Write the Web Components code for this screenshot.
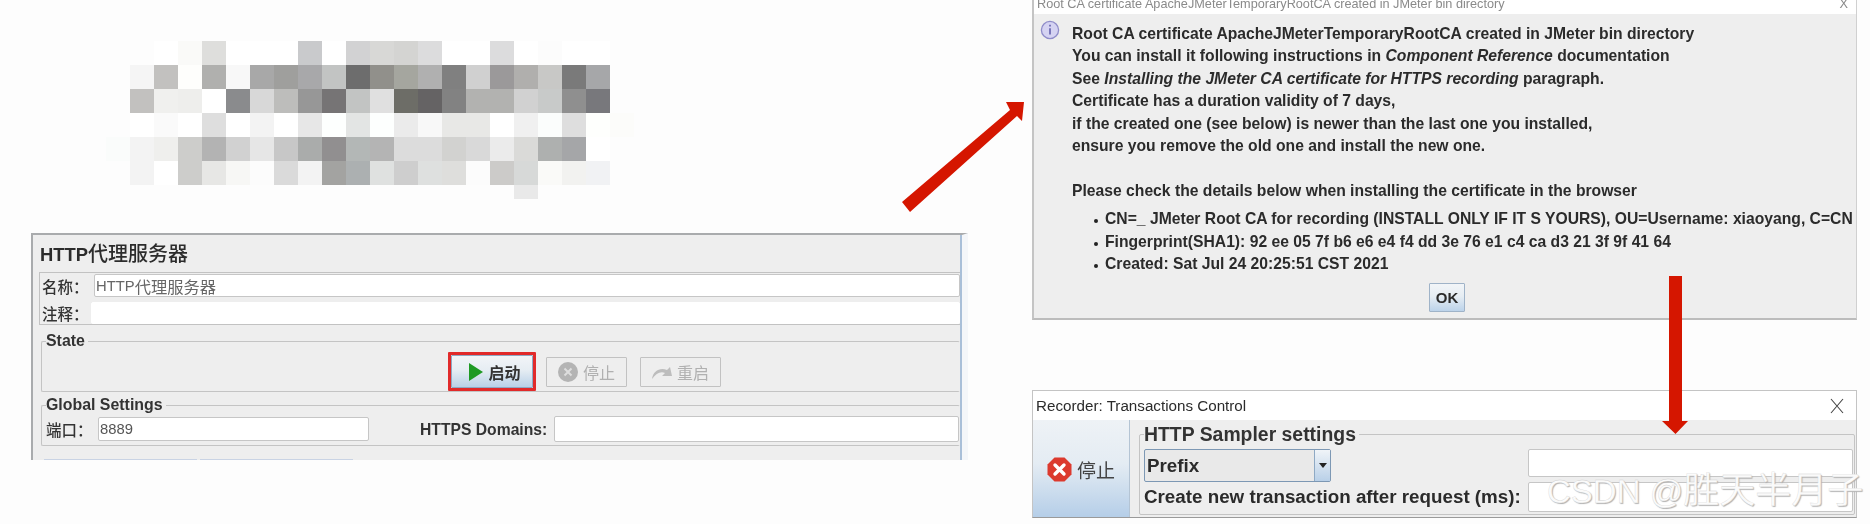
<!DOCTYPE html>
<html lang="zh">
<head>
<meta charset="utf-8">
<title>JMeter HTTP proxy recording</title>
<style>
  html, body { margin: 0; background: #fdfdfd; }
  body { width: 1870px; height: 524px; overflow: hidden; font-family: "Liberation Sans", "Noto Sans CJK SC", sans-serif; }
  #stage { position: relative; width: 1870px; height: 524px; }
  /* collage: each piece sits at its own place on the canvas */
  pixel-mosaic, proxy-panel, cert-dialog, recorder-panel, call-arrows, water-mark { position: absolute; }
  pixel-mosaic { left: 106px; top: 41px; }
  proxy-panel { left: 31px; top: 233px; }
  cert-dialog { left: 1032px; top: 0; }
  recorder-panel { left: 1032px; top: 390px; }
  call-arrows { left: 0; top: 0; }
  water-mark { left: 1547px; top: 469px; }
  water-mark span { font-size: 36px; }
</style>
</head>
<body>
<div id="stage">
  <pixel-mosaic></pixel-mosaic>
  <proxy-panel></proxy-panel>
  <cert-dialog></cert-dialog>
  <recorder-panel></recorder-panel>
  <call-arrows></call-arrows>
  <water-mark>CSDN @<span>胜天半月子</span></water-mark>
</div>

<script>
// Shared font stack for the shadow roots
const uiFont = `"Liberation Sans", "Noto Sans CJK SC", sans-serif`;

// Small helper: every element just clones its own template into an open root
function defineElement(name, html) {
  const template = document.createElement("template");
  template.innerHTML = html;
  customElements.define(name, class extends HTMLElement {
    constructor() {
      super();
      this.attachShadow({ mode: "open" });
      this.shadowRoot.appendChild(template.content.cloneNode(true));
    }
  });
}

// Blurred-out block at the top left
const mosaicRows = [
  "fdfdfd fdfdfd fff fafaf8 dededc fff fff fff c9cacc fff d2d2d3 d8d8d6 d4d4d2 dcdcdd fff fff dcdcdd fff fcfcfc fff fff fdfdfd",
  "fdfdfd f5f5f5 c2c1bf fefefc b0b0ae f8f8f8 a8a8a8 9f9f9d a8a8aa c2c4c3 6d6d6d 91908b a5a69f b0b0b0 808080 d0d0d0 9b999a b0afad c8c8c6 7a7a7a a6a7a9 fdfdfd",
  "fdfdfd c2c1bf f0f0ee eeeeec fff 8a8b8d d8d8d8 bdbdbb 979797 767475 c2c4c3 e0e0e0 6d6d67 656364 828282 b2b2b0 b2b2b0 d1d1d1 c8cac9 8f8f8f 78787c fdfdfd",
  "fdfdfd fff fafafa fff dedede fff f3f3f3 fff e7e7e7 fdfffe e3e5e4 fdfffe ebebeb f8f8f8 e8e8e6 e8e8e6 fff f0f0f0 fbfdfc dedede fefffd fcfcfa",
  "fafcfb f3f3f3 efefed cdcdcb b3b3b3 d1d1d1 e6e6e6 c7c7c7 aaacab 918f90 b3b7b6 b4b4b4 dcdcdc dcdcdc d2d2d0 d9d9d9 ebebeb dadad8 aeb0af a5a6a8 fff fdfdfd",
  "fdfdfd f3f3f3 fff cdcdcb e7e7e5 f7f7f5 fcfcfc dadada f3f3f3 a3a3a1 acb0b1 dfe1e0 cecece dee0df dededc fcfcfc cccbc9 d7d9d8 fafaf8 f2f2f0 f1f2f4 fdfdfd",
];

class PixelMosaic extends HTMLElement {
  constructor() {
    super();
    this.attachShadow({ mode: "open" });
    const cells = mosaicRows
      .flatMap((row) => row.split(" "))
      .map((c) => `<i style="background:#${c}"></i>`)
      .join("");
    this.shadowRoot.innerHTML = `
      <style>
        :host { display: grid; grid-template-columns: repeat(22, 24px); grid-auto-rows: 24px; }
        i { display: block; }
        .tail { grid-column: 18; height: 14px; background: #e9e9e9; }
      </style>
      ${cells}<i class="tail"></i>`;
  }
}
customElements.define("pixel-mosaic", PixelMosaic);

// Swing style titled border
defineElement("swing-group", `
  <style>
    :host { display: block; box-sizing: border-box; }
    fieldset {
      box-sizing: border-box;
      height: 100%;
      margin: 0;
      padding: 0;
      border: 1px solid var(--group-line, #c4c4c4);
      border-right-color: var(--group-right, #c4c4c4);
      border-radius: 2px;
      min-width: 0;
    }
    legend {
      margin-left: 4px;
      padding: 0 3px 0 0;
      font-weight: bold;
      color: #333;
      font-size: var(--legend-size, 15.9px);
      line-height: var(--legend-height, 18px);
    }
  </style>
  <fieldset>
    <legend><slot name="legend"></slot></legend>
    <slot></slot>
  </fieldset>
`);

defineElement("swing-button", `
  <style>
    :host {
      display: inline-flex;
      align-items: center;
      justify-content: center;
      gap: 5px;
      box-sizing: border-box;
      width: 81px;
      height: 30px;
      border: 1px solid #c2c2c2;
      border-radius: 1px;
      font-size: 16px;
      color: #b0b0b0;
      background: #eeeeee;
    }
    :host([active]) {
      width: 82px;
      height: 33px;
      padding-left: 6px;
      border-color: #8ea9c4;
      color: #333;
      font-weight: bold;
      background: linear-gradient(#f2f5f8, #e6edf3 45%, #b9d1e8);
    }
    ::slotted(svg) { flex: none; }
  </style>
  <slot name="icon"></slot><slot></slot>
`);

// Text box
defineElement("swing-input", `
  <style>
    :host {
      display: flex;
      align-items: center;
      box-sizing: border-box;
      min-width: 0;
      padding-left: 1px;
      background: #fff;
      border: 1px solid var(--input-line, #c6c6c6);
      border-radius: 2px;
      font-size: 14.8px;
      color: var(--input-color, #666);
      white-space: nowrap;
      overflow: hidden;
    }
  </style>
  <slot></slot>
`);

// HTTP proxy settings panel on the lower left
defineElement("proxy-panel", `
  <style>
    :host {
      display: flex;
      flex-direction: column;
      box-sizing: border-box;
      width: 937px;
      height: 227px;
      overflow: hidden;
      background: #eeeeee;
      border-top: 2px solid #a9abad;
      border-left: 2px solid #a9abad;
      border-right: 6px solid #f4f6f9;
      font-family: ${uiFont};
      color: #333;
      filter: blur(0.35px);
    }
    .inner { display: flex; flex-direction: column; height: 100%; border-right: 2px solid #a9bfd8; }
    h1 {
      flex: none;
      box-sizing: border-box;
      height: 37px;
      margin: 0;
      padding: 8px 0 0 7px;
      font-size: 18.4px;
      line-height: 23px;
      font-weight: bold;
      color: #2c2c2c;
    }
    h1 span { font-size: 20px; font-weight: 500; }
    .names {
      flex: none;
      box-sizing: border-box;
      height: 53px;
      margin-left: 6px;
      border: 1px solid #c2c2c2;
      border-right: 0;
      display: grid;
      grid-template-rows: 23px 22px;
      row-gap: 5px;
      padding-top: 1px;
    }
    .name-row { display: grid; align-items: center; font-size: 15.5px; padding-left: 2px; font-weight: 500; }
    .name-row.first { grid-template-columns: 52px 1fr; }
    .name-row.second { grid-template-columns: 49px 1fr; }
    .name-row swing-input { height: 100%; font-weight: normal; }
    .name-row.second swing-input { --input-line: #fff; }
    .cjk { font-size: 16.3px; }
    .state { flex: none; height: 60px; margin: 7px 0 0 8px; --group-right: transparent; }
    .state-row { display: flex; align-items: flex-start; padding: 2px 0 0 406px; gap: 10px; }
    .mark { box-sizing: border-box; display: flex; width: 88px; height: 39px; border: 3px solid #e12a2a; border-radius: 1px; }
    .restart { margin-left: 3px; }
    .state-row swing-button:not([active]) { margin-top: 5px; }
    .global { flex: none; height: 50px; margin: 4px 0 0 8px; --group-right: transparent; }
    .global-row { display: flex; align-items: flex-start; padding: 3px 0 0 4px; font-size: 15.5px; font-weight: 500; }
    .global-row .port { width: 52px; line-height: 28px; }
    .global-row swing-input { height: 24px; font-weight: normal; --input-color: #555; }
    .port-input { width: 271px; }
    .https { margin-left: 51px; width: 134px; font-weight: bold; font-size: 15.7px; line-height: 25px; white-space: nowrap; }
    .https-input { flex: 1; height: 26px !important; margin-top: -1px; }
    .tabs { flex: none; display: flex; gap: 3px; height: 4px; margin: 13px 0 0 11px; }
    .tabs i { display: block; width: 153px; background: #c9d3e4; }
  </style>
  <div class="inner">
    <h1>HTTP<span>代理服务器</span></h1>
    <div class="names">
      <div class="name-row first"><span>名称：</span><swing-input>HTTP<span class="cjk">代理服务器</span></swing-input></div>
      <div class="name-row second"><span>注释：</span><swing-input></swing-input></div>
    </div>
    <swing-group class="state">
      <span slot="legend">State</span>
      <div class="state-row">
        <div class="mark">
          <swing-button active>
            <svg slot="icon" width="14" height="18" viewBox="0 0 14 18"><path d="M0 0 L14 9 L0 18 Z" fill="#1e9a24"/></svg>启动
          </swing-button>
        </div>
        <swing-button>
          <svg slot="icon" width="20" height="20" viewBox="0 0 20 20"><circle cx="10" cy="10" r="10" fill="#b4b4b4"/><path d="M6.5 6.5 L13.5 13.5 M13.5 6.5 L6.5 13.5" stroke="#dedede" stroke-width="2"/></svg>停止
        </swing-button>
        <swing-button class="restart">
          <svg slot="icon" width="20" height="13" viewBox="0 0 20 13"><path d="M0 13 C1 5 8 1 15 4 L18 1 L20 10 L10 10 L13 7 C8 5 4 8 0 13 Z" fill="#bdbdbd"/></svg>重启
        </swing-button>
      </div>
    </swing-group>
    <swing-group class="global">
      <span slot="legend">Global Settings</span>
      <div class="global-row">
        <span class="port">端口：</span>
        <swing-input class="port-input">8889</swing-input>
        <span class="https">HTTPS Domains:</span>
        <swing-input class="https-input"></swing-input>
      </div>
    </swing-group>
    <div class="tabs"><i></i><i></i></div>
  </div>
`);

// Root CA message box, its title bar is cut by the top of the picture
defineElement("cert-dialog", `
  <style>
    :host {
      display: flex;
      flex-direction: column;
      box-sizing: border-box;
      width: 825px;
      height: 320px;
      background: #eeeeee;
      border-left: 2px solid #c4c4c4;
      border-right: 1px solid #d0d0d0;
      border-bottom: 2px solid #bcbcbc;
      font-family: ${uiFont};
      color: #2b2b2b;
      filter: blur(0.3px);
    }
    .bar {
      flex: none;
      display: flex;
      align-items: flex-end;
      justify-content: space-between;
      height: 14px;
      background: #fff;
      overflow: hidden;
      padding: 0 8px 0 3px;
      font-size: 12.7px;
      line-height: 20px;
      color: #8a8a8a;
    }
    .body { flex: 1; display: flex; padding: 9px 0 0 6px; min-height: 0; }
    svg { flex: none; margin: -3px 12px 0 0; }
    .msg { font-size: 15.7px; font-weight: bold; line-height: 22.4px; min-width: 0; white-space: nowrap; }
    p { margin: 0; }
    .gap { height: 22.4px; }
    ul { list-style: none; margin: 6px 0 0; padding: 0 0 0 22px; }
    li { display: flex; align-items: center; gap: 7px; }
    li::before { content: ""; width: 4px; height: 4px; margin-top: 4px; border-radius: 50%; background: #222; flex: none; }
    .ok { display: flex; justify-content: center; padding: 8px 0 0 0; width: 750px; }
    button {
      box-sizing: border-box;
      width: 36px;
      height: 29px;
      padding: 0;
      font: bold 15px ${uiFont};
      color: #2b2b2b;
      border: 1px solid #9fb3c8;
      border-radius: 1px;
      background: linear-gradient(#f2f5f8, #e6edf3 45%, #bcd3ea);
    }
  </style>
  <div class="bar"><span>Root CA certificate ApacheJMeterTemporaryRootCA created in JMeter bin directory</span><span>X</span></div>
  <div class="body">
    <svg width="20" height="20" viewBox="0 0 20 20">
      <circle cx="10" cy="10" r="8.6" fill="#d5d3f2" stroke="#8f8cc9" stroke-width="1.3"/>
      <path d="M10 4.8 V6.4 M10 8.2 V14.6" stroke="#5b58a8" stroke-width="1.5"/>
    </svg>
    <div class="msg">
      <p>Root CA certificate ApacheJMeterTemporaryRootCA created in JMeter bin directory</p>
      <p>You can install it following instructions in <i>Component Reference</i> documentation</p>
      <p>See <i>Installing the JMeter CA certificate for HTTPS recording</i> paragraph.</p>
      <p>Certificate has a duration validity of 7 days,</p>
      <p>if the created one (see below) is newer than the last one you installed,</p>
      <p>ensure you remove the old one and install the new one.</p>
      <div class="gap"></div>
      <p>Please check the details below when installing the certificate in the browser</p>
      <ul>
        <li>CN=_ JMeter Root CA for recording (INSTALL ONLY IF IT S YOURS), OU=Username: xiaoyang, C=CN</li>
        <li>Fingerprint(SHA1): 92 ee 05 7f b6 e6 e4 f4 dd 3e 76 e1 c4 ca d3 21 3f 9f 41 64</li>
        <li>Created: Sat Jul 24 20:25:51 CST 2021</li>
      </ul>
      <div class="ok"><button>OK</button></div>
    </div>
  </div>
`);

// Recorder window at the lower right
defineElement("recorder-panel", `
  <style>
    :host {
      display: flex;
      flex-direction: column;
      box-sizing: border-box;
      width: 825px;
      height: 128px;
      background: #eeeeee;
      border: 1px solid #c4c4c4;
      border-bottom: 1px solid #9a9a9a;
      font-family: ${uiFont};
      color: #2b2b2b;
      filter: blur(0.3px);
    }
    .bar {
      flex: none;
      display: flex;
      align-items: center;
      justify-content: space-between;
      height: 29px;
      padding: 0 12px 0 3px;
      background: #fff;
      font-size: 15.2px;
    }
    .body { flex: 1; display: flex; min-height: 0; }
    .stop {
      flex: none;
      box-sizing: border-box;
      width: 97px;
      display: flex;
      align-items: center;
      justify-content: center;
      gap: 5px;
      padding-top: 2px;
      font-size: 19px;
      color: #444;
      background: linear-gradient(#eef2f6, #e4ecf3 45%, #b5cee8);
      border-right: 1px solid #b4c4d4;
    }
    .stop svg { flex: none; }
    .settings {
      flex: 1;
      height: 92px;
      margin: 3px 1px 0 9px;
      --legend-size: 19.4px;
      --legend-height: 22px;
    }
    .grid {
      display: grid;
      grid-template-columns: 384px 325px;
      grid-template-rows: 33px 30px;
      padding: 4px 0 0 4px;
      font-weight: bold;
      font-size: 18.8px;
    }
    .combo {
      box-sizing: border-box;
      width: 187px;
      display: flex;
      border: 1px solid #7d98b4;
      border-radius: 2px;
      background: #e9e9e9;
      line-height: 31px;
      padding-left: 2px;
    }
    .combo span { flex: 1; }
    .combo b {
      width: 15px;
      display: flex;
      align-items: center;
      justify-content: center;
      background: linear-gradient(#f0f4f8, #b9d0e8);
      border-left: 1px solid #8ea9c4;
    }
    .combo b::after { content: ""; border: 4px solid transparent; border-top: 5px solid #222; margin-top: 4px; }
    .row-input { height: 28px; }
    .tall-input { height: 30px; }
    .label { line-height: 30px; white-space: nowrap; }
  </style>
  <div class="bar">
    <span>Recorder: Transactions Control</span>
    <svg width="14" height="16" viewBox="0 0 14 16"><path d="M1 1 L13 15 M13 1 L1 15" stroke="#444" stroke-width="1.1" fill="none"/></svg>
  </div>
  <div class="body">
    <div class="stop">
      <svg width="25" height="25" viewBox="0 0 25 25">
        <path d="M7.5 0.5 H17.5 L24.5 7.5 V17.5 L17.5 24.5 H7.5 L0.5 17.5 V7.5 Z" fill="#dc3a2e"/>
        <path d="M8 8 L17 17 M17 8 L8 17" stroke="#fff" stroke-width="3.4" stroke-linecap="round"/>
      </svg>
      <span>停止</span>
    </div>
    <swing-group class="settings">
      <span slot="legend">HTTP Sampler settings</span>
      <div class="grid">
        <div class="combo"><span>Prefix</span><b></b></div>
        <swing-input class="row-input"></swing-input>
        <div class="label">Create new transaction after request (ms):</div>
        <swing-input class="tall-input"></swing-input>
      </div>
    </swing-group>
  </div>
`);

// The two red annotation arrows, they lie over the panels
defineElement("call-arrows", `
  <style>
    :host { display: block; width: 1870px; height: 524px; pointer-events: none; }
    svg { display: block; }
  </style>
  <svg width="1870" height="524" viewBox="0 0 1870 524" fill="#d51600">
    <path d="M902 202 L1010 110 L1006 102 L1024 102 L1022 121 L1017 116 L910 212 Z"/>
    <path d="M1669 276 H1682 V421 H1688 L1675.5 434 L1662 421 H1669 Z"/>
  </svg>
`);

// Site watermark
defineElement("water-mark", `
  <style>
    :host {
      display: block;
      font-family: ${uiFont};
      font-size: 33px;
      line-height: 44px;
      white-space: nowrap;
      color: rgba(255, 255, 255, 0.95);
      -webkit-text-stroke: 0.3px #d0d0d0;
      text-shadow: 1px 1px 1px #b0b0b0;
    }
  </style>
  <slot></slot>
`);
</script>
</body>
</html>
